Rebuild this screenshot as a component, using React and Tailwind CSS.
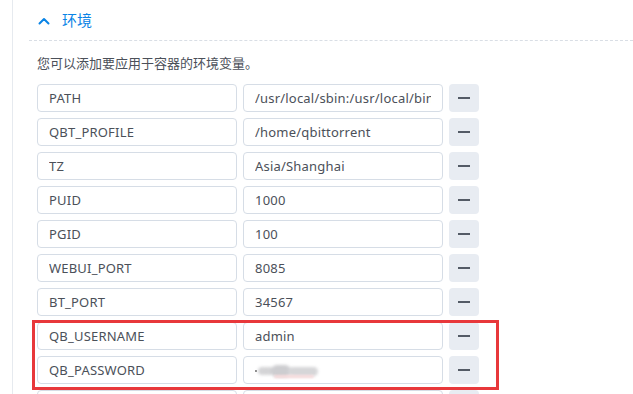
import React from 'react';

const rows = [
  ['PATH', '/usr/local/sbin:/usr/local/bin:/usr/sbin:/usr/bin:/sbin:/bin'],
  ['QBT_PROFILE', '/home/qbittorrent'],
  ['TZ', 'Asia/Shanghai'],
  ['PUID', '1000'],
  ['PGID', '100'],
  ['WEBUI_PORT', '8085'],
  ['BT_PORT', '34567'],
  ['QB_USERNAME', 'admin'],
  ['QB_PASSWORD', null],
  ['', ''],
];

function Field({ value, children }) {
  return (
    <div className="relative w-[200px] h-[28px] shrink-0 rounded-[4px] border border-[#d6dde6] bg-white overflow-hidden">
      {value !== null ? (
        <input
          readOnly
          value={value}
          className="w-full h-full px-[11px] bg-transparent outline-none text-[13px] tracking-[0.2px] text-[#4b5059]"
        />
      ) : (
        children
      )}
    </div>
  );
}

export default function App() {
  return (
    <div
      className="relative w-[633px] h-[394px] overflow-hidden bg-white"
      style={{ fontFamily: '"Noto Sans", "Noto Sans CJK SC", sans-serif' }}
    >
      <div className="ml-[12px] h-full border-l border-[#e6eaef] pl-[16px]">
        {/* 标题 */}
        <div className="flex items-center h-[41px] pt-[1px] border-b border-dashed border-[#d9dee5]">
          <svg className="ml-[9px] w-[12px] h-[8px]" viewBox="0 0 12 8" fill="none">
            <path d="M1.5 6.5L6 2L10.5 6.5" stroke="#0a84e6" strokeWidth="2" strokeLinecap="round" strokeLinejoin="round" />
          </svg>
          <span className="ml-[12px] text-[15px] text-[#0a84e6]">环境</span>
        </div>

        <div className="pl-[8px]">
          <p className="mt-[12px] h-[20px] leading-[20px] text-[13px] text-[#4b5059]">您可以添加要应用于容器的环境变量。</p>

          <div className="mt-[11px] flex flex-col gap-[6px]">
            {rows.map(([k, v], i) => (
              <div key={i} className="flex gap-[6px]">
                <Field value={k} />
                <Field value={v}>
                  {/* 打码的密码 */}
                  <div className="absolute left-[11px] top-[13px] w-[2px] h-[2px] rounded-full bg-[#666]" />
                  <div className="absolute left-[14px] top-[8px] flex items-center blur-[1.5px]">
                    <span className="w-[16px] h-[8px] rounded-full bg-[#d4d4d6]" />
                    <span className="w-[20px] h-[12px] -ml-[3px] rounded-full bg-[#cdcdd0]" />
                    <span className="w-[30px] h-[9px] -ml-[3px] rounded-full bg-[#d6d6d8]" />
                  </div>
                  <div className="absolute left-[30px] top-[18px] w-[40px] h-[3px] rounded-full bg-[#f5d9da] blur-[1px]" />
                </Field>
                <button className="w-[30px] h-[28px] rounded-[4px] bg-[#e8ecf2] flex items-center justify-center">
                  <span className="w-[12px] h-[2px] bg-[#545b66]" />
                </button>
              </div>
            ))}
          </div>
        </div>
      </div>

      {/* 标注框 */}
      <div className="absolute left-[32px] top-[320px] w-[467px] h-[70px] border-[3px] border-[#e8383b]" />
    </div>
  );
}
